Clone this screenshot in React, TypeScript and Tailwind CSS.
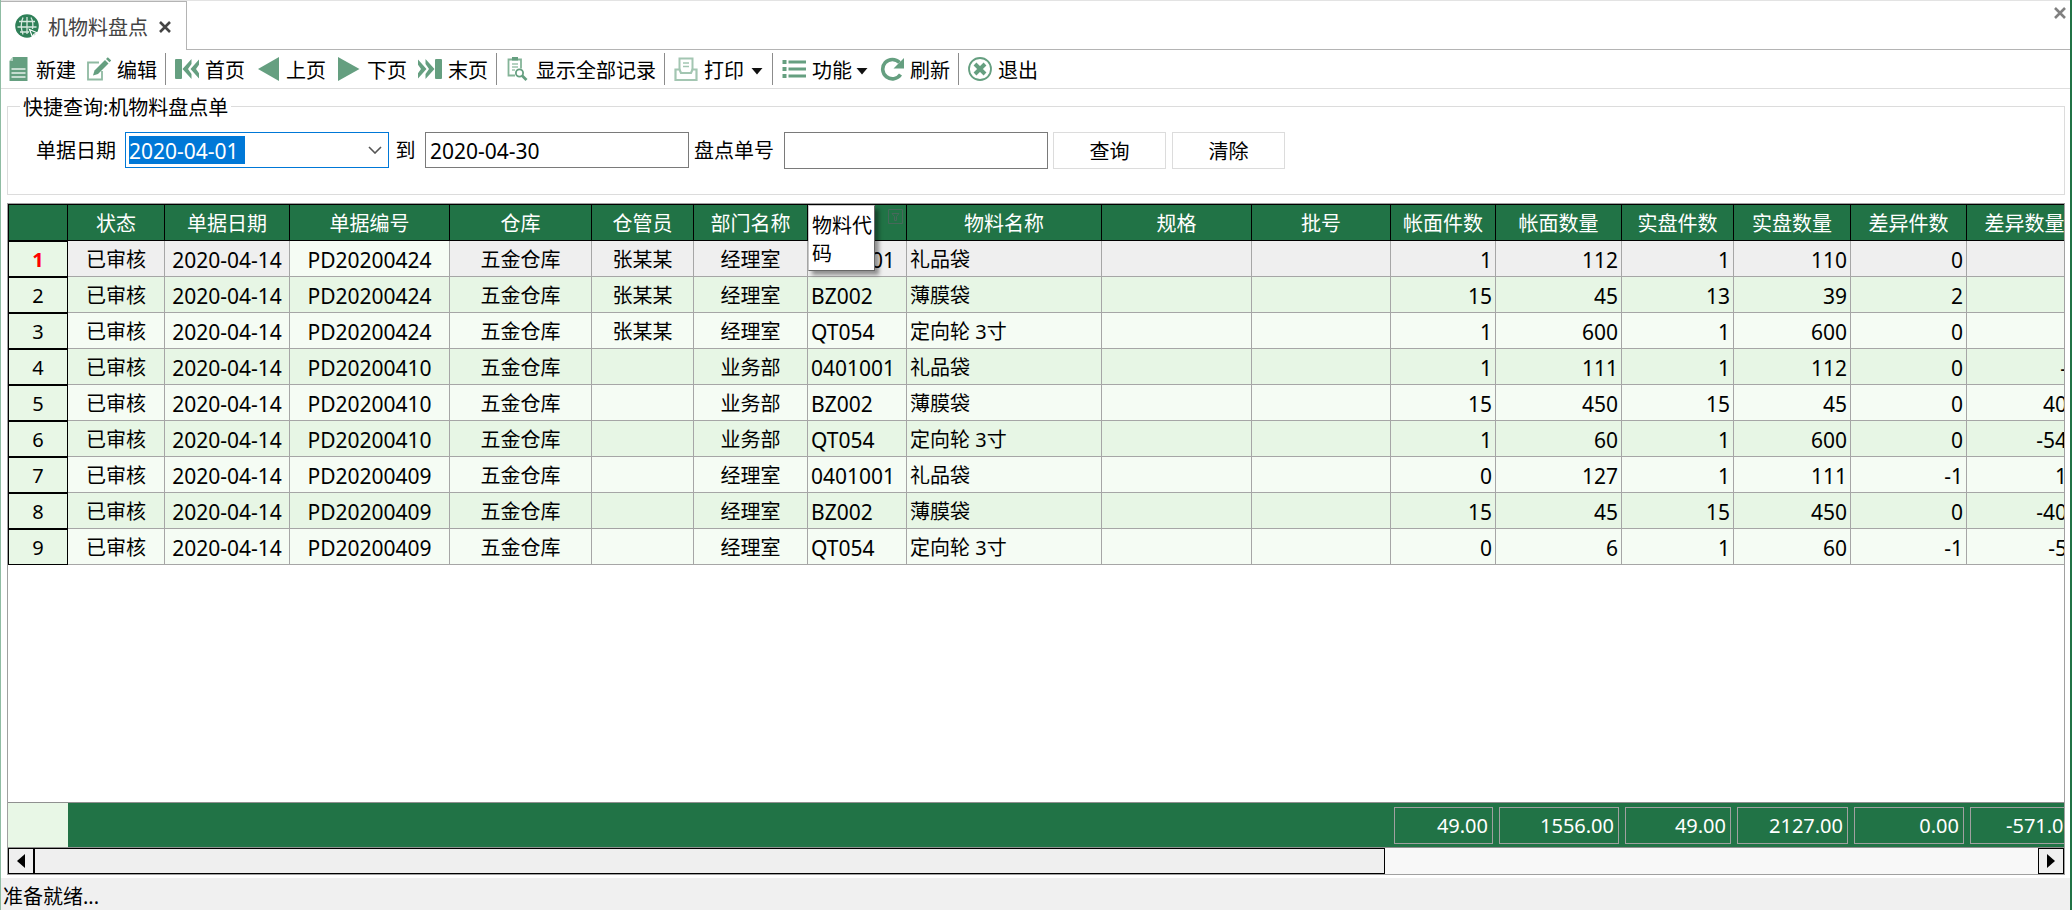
import { useState } from "react";
import type { ReactNode } from "react";
import clsx from "clsx";

type Align = "center" | "left" | "right";

interface Column {
  key: string;
  title: string;
  width: string;
  align: Align;
  latin?: boolean;
  total?: string;
}

const COLUMNS: Column[] = [
  { key: "status", title: "状态", width: "w-[97px]", align: "center" },
  { key: "date", title: "单据日期", width: "w-[125px]", align: "center", latin: true },
  { key: "docNo", title: "单据编号", width: "w-[160px]", align: "center", latin: true },
  { key: "warehouse", title: "仓库", width: "w-[142px]", align: "center" },
  { key: "keeper", title: "仓管员", width: "w-[102px]", align: "center" },
  { key: "dept", title: "部门名称", width: "w-[114px]", align: "center" },
  { key: "code", title: "物料代码", width: "w-[99px]", align: "left", latin: true },
  { key: "name", title: "物料名称", width: "w-[195px]", align: "left" },
  { key: "spec", title: "规格", width: "w-[150px]", align: "left" },
  { key: "batch", title: "批号", width: "w-[139px]", align: "left" },
  { key: "bookPieces", title: "帐面件数", width: "w-[105px]", align: "right", latin: true, total: "49.00" },
  { key: "bookQty", title: "帐面数量", width: "w-[126px]", align: "right", latin: true, total: "1556.00" },
  { key: "realPieces", title: "实盘件数", width: "w-[112px]", align: "right", latin: true, total: "49.00" },
  { key: "realQty", title: "实盘数量", width: "w-[117px]", align: "right", latin: true, total: "2127.00" },
  { key: "diffPieces", title: "差异件数", width: "w-[116px]", align: "right", latin: true, total: "0.00" },
  { key: "diffQty", title: "差异数量", width: "w-[116px]", align: "right", latin: true, total: "-571.00" },
];

const D = "2020-04-14";

const ROWS: string[][] = [
  ["已审核", D, "PD20200424", "五金仓库", "张某某", "经理室", "0401001", "礼品袋", "", "", "1", "112", "1", "110", "0", "2"],
  ["已审核", D, "PD20200424", "五金仓库", "张某某", "经理室", "BZ002", "薄膜袋", "", "", "15", "45", "13", "39", "2", "6"],
  ["已审核", D, "PD20200424", "五金仓库", "张某某", "经理室", "QT054", "定向轮 3寸", "", "", "1", "600", "1", "600", "0", "0"],
  ["已审核", D, "PD20200410", "五金仓库", "", "业务部", "0401001", "礼品袋", "", "", "1", "111", "1", "112", "0", "-1"],
  ["已审核", D, "PD20200410", "五金仓库", "", "业务部", "BZ002", "薄膜袋", "", "", "15", "450", "15", "45", "0", "405"],
  ["已审核", D, "PD20200410", "五金仓库", "", "业务部", "QT054", "定向轮 3寸", "", "", "1", "60", "1", "600", "0", "-540"],
  ["已审核", D, "PD20200409", "五金仓库", "", "经理室", "0401001", "礼品袋", "", "", "0", "127", "1", "111", "-1", "16"],
  ["已审核", D, "PD20200409", "五金仓库", "", "经理室", "BZ002", "薄膜袋", "", "", "15", "45", "15", "450", "0", "-405"],
  ["已审核", D, "PD20200409", "五金仓库", "", "经理室", "QT054", "定向轮 3寸", "", "", "0", "6", "1", "60", "-1", "-54"],
];

const ALIGN = {
  center: "text-center",
  left: "text-left pl-[3px]",
  right: "text-right pr-[3px]",
};

function Icon({ children }: { children: ReactNode }) {
  return (
    <svg viewBox="0 0 24 24" className="w-6 h-6 shrink-0 text-[#659f80]" fill="none" stroke="currentColor" aria-hidden="true">
      {children}
    </svg>
  );
}

function NewIcon() {
  return (
    <Icon>
      <path d="M7 0h14.500v24h-18V4z" fill="currentColor" stroke="none" />
      <path d="M3.500 4 7 0v4z" fill="#b5d2c1" stroke="none" />
      <path d="M5.500 12h14M5.500 16h14M5.500 20h14" stroke="#e6f1ea" strokeWidth="1.500" />
    </Icon>
  );
}

function EditIcon() {
  return (
    <Icon>
      <path d="M12 5.500H1v17h14V14" stroke="#8fbaa2" strokeWidth="1.800" />
      <path d="m6 18.500 1.500-5L18 3l3.500 3.500L11 17z" fill="currentColor" stroke="none" />
      <path d="m19 2 1.800-1.800L24.300 3.500 22.500 5.300z" fill="currentColor" stroke="none" />
    </Icon>
  );
}

function FirstIcon() {
  return (
    <Icon>
      <rect x="0" y="2" width="7" height="20" rx="1" fill="currentColor" stroke="none" />
      <path d="M16.500 2v5L13 12l3.500 5v5L7.500 12zM24.500 2v5L21 12l3.500 5v5L15.500 12z" fill="currentColor" stroke="none" />
    </Icon>
  );
}

function LastIcon() {
  return (
    <Icon>
      <rect x="17" y="2" width="7" height="20" rx="1" fill="currentColor" stroke="none" />
      <path d="M7.500 2v5l3.500 5-3.500 5v5l9-10zM-0.500 2v5L3 12l-3.500 5v5l9-10z" fill="currentColor" stroke="none" />
    </Icon>
  );
}

function PrevIcon() {
  return (
    <Icon>
      <path d="M23 0v24L2 12z" fill="currentColor" stroke="none" />
    </Icon>
  );
}

function NextIcon() {
  return (
    <Icon>
      <path d="M1 0v24l21.500-12z" fill="currentColor" stroke="none" />
    </Icon>
  );
}

function RecordsIcon() {
  return (
    <Icon>
      <path d="M9 18.500H2.500v-16H15v9" stroke="#84b498" strokeWidth="1.800" />
      <path d="M6 0h6v3.500H6z" fill="currentColor" stroke="none" />
      <path d="M6 7h6M6 10h6M6 13h3" stroke="#b5d2c1" strokeWidth="1.800" />
      <circle cx="13.500" cy="16" r="3.600" strokeWidth="1.800" fill="#fff" />
      <path d="m16.200 18.800 4.300 4.200" strokeWidth="2.800" />
    </Icon>
  );
}

function PrintIcon() {
  return (
    <Icon>
      <g stroke="#a3c6b2">
        <path d="M5.500 13V1.500h13V13" strokeWidth="2" />
        <path d="M9 6h6M9 9.500h6" strokeWidth="1.600" />
        <path d="M5.500 12.500h-4V23h21V12.500h-4L17 16H7z" strokeWidth="2.200" />
      </g>
    </Icon>
  );
}

function ListIcon() {
  return (
    <Icon>
      <path d="M6.500 5h17.500M6.500 12h17.500M6.500 19h17.500" strokeWidth="3.200" />
      <path d="M0.500 5h4M0.500 12h4M0.500 19h4" strokeWidth="4" />
    </Icon>
  );
}

function RefreshIcon() {
  return (
    <Icon>
      <path d="M19.500 5.500A9.700 9.700 0 1 0 20.500 17.500" strokeWidth="3.600" />
      <path d="M24 1v10.500H13.500z" fill="currentColor" stroke="none" />
    </Icon>
  );
}

function ExitIcon() {
  return (
    <Icon>
      <circle cx="12" cy="12" r="11" strokeWidth="1.800" />
      <path d="m7 7 10 10M17 7 7 17" strokeWidth="4" />
    </Icon>
  );
}

function GlobeIcon() {
  return (
    <svg viewBox="0 0 24 24" className="w-6 h-6 shrink-0" fill="none" aria-hidden="true">
      <circle cx="12" cy="12" r="11.800" fill="#2f8058" />
      <g stroke="#d7e9df" strokeWidth="1.300">
        <path d="M12 3v17M4 7.500h16M2.500 13h19M5 18h9" />
        <path d="M8 3.500C6 8 6 15 8 20.500M16 3.500C18 7 18 12 17.500 15" />
      </g>
      <path d="m14.500 15.500 8 3.500-3.500 1.200L17.500 23z" fill="#2f8058" stroke="#fff" strokeWidth="1.200" />
    </svg>
  );
}

function CloseGlyph() {
  return (
    <svg viewBox="0 0 12 12" className="w-3 h-3" stroke="currentColor" strokeWidth="2.600" fill="none" aria-hidden="true">
      <path d="m1 1 10 10M11 1 1 11" />
    </svg>
  );
}

function Caret() {
  return (
    <svg viewBox="0 0 14 8" className="w-[14px] h-2 shrink-0" fill="#111" aria-hidden="true">
      <path d="M1.500 1h11L7 7.500z" />
    </svg>
  );
}

function ToolButton({ icon, label, caret }: { icon: ReactNode; label: string; caret?: boolean }) {
  return (
    <button type="button" className="flex items-center gap-[6px] whitespace-nowrap">
      {icon}
      <span className="flex items-center gap-[3px] pt-1">
        {label}
        {caret && <Caret />}
      </span>
    </button>
  );
}

function ToolGroup({ children, last }: { children: ReactNode; last?: boolean }) {
  return (
    <div className={clsx("flex items-center gap-[11px] h-8 pr-2", !last && "border-r border-[#8c8c8c]")}>
      {children}
    </div>
  );
}

function GridColumns() {
  return (
    <colgroup>
      <col className="w-[60px]" />
      {COLUMNS.map((col) => (
        <col key={col.key} className={col.width} />
      ))}
    </colgroup>
  );
}

export default function App() {
  const [from, setFrom] = useState("2020-04-01");
  const [to, setTo] = useState("2020-04-30");
  const [docNo, setDocNo] = useState("");
  const [current, setCurrent] = useState(0);

  return (
    <div className="min-h-screen flex flex-col bg-white border-l border-l-[#8fbca3] border-r-2 border-r-[#217346] text-[20px] leading-7 text-black font-['Noto_Sans','Noto_Sans_CJK_SC',sans-serif]">
      {/* Tabs */}
      <div className="flex h-[50px] border-t border-[#e3e3e3]">
        <div className="flex items-center gap-[9px] w-[186px] pl-[14px] border-t border-r border-[#b4b4b4] text-[#444]">
          <GlobeIcon />
          <span className="pt-1 whitespace-nowrap">机物料盘点</span>
          <button type="button" aria-label="关闭标签" className="pl-[2px] pt-[2px]">
            <CloseGlyph />
          </button>
        </div>
        <div className="flex flex-1 items-start justify-end border-b border-[#b4b4b4] pt-[6px] pr-1 text-[#808080]">
          <button type="button" aria-label="关闭窗口">
            <CloseGlyph />
          </button>
        </div>
      </div>

      {/* Toolbar */}
      <div className="flex items-center gap-[9px] h-[39px] pl-[5px] border-b border-[#dedede]">
        <ToolGroup>
          <ToolButton icon={<NewIcon />} label="新建" />
          <ToolButton icon={<EditIcon />} label="编辑" />
        </ToolGroup>
        <ToolGroup>
          <ToolButton icon={<FirstIcon />} label="首页" />
          <ToolButton icon={<PrevIcon />} label="上页" />
          <ToolButton icon={<NextIcon />} label="下页" />
          <ToolButton icon={<LastIcon />} label="末页" />
        </ToolGroup>
        <ToolGroup>
          <ToolButton icon={<RecordsIcon />} label="显示全部记录" />
        </ToolGroup>
        <ToolGroup>
          <div className="flex items-center gap-[6px]">
            <ToolButton icon={<PrintIcon />} label="打印" />
            <button type="button" aria-label="打印选项" className="pt-1">
              <Caret />
            </button>
          </div>
        </ToolGroup>
        <ToolGroup>
          <ToolButton icon={<ListIcon />} label="功能" caret />
          <ToolButton icon={<RefreshIcon />} label="刷新" />
        </ToolGroup>
        <ToolGroup last>
          <ToolButton icon={<ExitIcon />} label="退出" />
        </ToolGroup>
      </div>

      {/* Quick query */}
      <fieldset className="mt-[3px] ml-[6px] mr-[5px] px-3 border border-[#dcdcdc]">
        <legend className="h-7 px-[3px] pt-[2px]">快捷查询:机物料盘点单</legend>
        <div className="flex items-start pt-3 pb-[25px] pl-4">
          <label htmlFor="date-from" className="w-[89px] pt-[5px] whitespace-nowrap">单据日期</label>
          <div className="flex items-center justify-between w-[264px] h-9 px-[3px] border border-[#0078d7]">
            <input
              id="date-from"
              value={from}
              onChange={(e) => setFrom(e.target.value)}
              className="w-[116px] h-7 pt-[2px] bg-[#0078d7] text-white text-[21px] outline-none"
            />
            <button type="button" aria-label="选择日期" className="pr-[3px]">
              <svg viewBox="0 0 14 8" className="w-[14px] h-2" fill="none" stroke="#555" strokeWidth="1.600" aria-hidden="true">
                <path d="m1 1 6 6 6-6" />
              </svg>
            </button>
          </div>
          <label htmlFor="date-to" className="w-9 pt-[5px] pr-[3px] text-center">到</label>
          <input
            id="date-to"
            value={to}
            onChange={(e) => setTo(e.target.value)}
            className="w-[264px] h-9 px-1 pt-[2px] border border-[#7a7a7a] text-[21px] outline-none"
          />
          <label htmlFor="doc-no" className="w-[95px] pt-[5px] pl-[5px] whitespace-nowrap">盘点单号</label>
          <input
            id="doc-no"
            value={docNo}
            onChange={(e) => setDocNo(e.target.value)}
            className="w-[264px] h-[37px] px-1 pt-[2px] border border-[#7a7a7a] text-[21px] outline-none"
          />
          <div className="flex gap-[6px] pl-[5px]">
            <button type="button" className="w-[113px] h-[37px] pt-[2px] border border-[#dcdcdc]">查询</button>
            <button type="button" className="w-[113px] h-[37px] pt-[2px] border border-[#dcdcdc]">清除</button>
          </div>
        </div>
      </fieldset>

      {/* Grid */}
      <div className="flex-1 flex flex-col mt-2 ml-[6px] mr-[5px] border border-[#a0a0a0] overflow-hidden">
        <div className="flex-1 overflow-hidden">
          <table className="w-[2075px] table-fixed border-separate border-spacing-0">
            <GridColumns />
            <thead>
              <tr className="h-[37px] bg-[#217346] text-white">
                <th className="border border-black" aria-label="行号" />
                {COLUMNS.map((col) => (
                  <th key={col.key} className="relative p-0 pt-[2px] border-t border-r border-b border-black font-normal whitespace-nowrap">
                    {col.key === "code" ? (
                      <>
                        <div className="absolute top-0 left-0 z-10 w-[67px] h-[66px] pl-[3px] pt-[6px] bg-white border border-t-[#c8c8c8] border-l-[#c8c8c8] border-r-[#666] border-b-[#666] shadow-[4px_4px_4px_rgba(0,0,0,0.4)] text-left text-black whitespace-normal">
                          {col.title}
                        </div>
                        <svg viewBox="0 0 15 15" className="absolute top-1 right-[3px] w-[15px] h-[15px]" fill="none" stroke="#47685b" aria-hidden="true">
                          <path d="M0.500 0.500h14v14H0.500zM4 4.500h7L8.500 7.500v4h-2v-4z" />
                        </svg>
                      </>
                    ) : (
                      col.title
                    )}
                  </th>
                ))}
              </tr>
            </thead>
            <tbody>
              {ROWS.map((row, i) => (
                <tr
                  key={i}
                  onClick={() => setCurrent(i)}
                  className={clsx("h-9", i === current ? "bg-[#efefef]" : i % 2 ? "bg-[#e7f6e5]" : "bg-[#f5fcf4]")}
                >
                  <th
                    className={clsx(
                      "p-0 pt-[2px] border border-black bg-[#e8f7e6]",
                      i === current ? "font-bold text-[#ff0000]" : "font-normal",
                    )}
                  >
                    {i + 1}
                  </th>
                  {COLUMNS.map((col, c) => (
                    <td
                      key={col.key}
                      className={clsx(
                        "p-0 pt-[2px] border-r border-b border-[#a6a6a6] whitespace-nowrap overflow-hidden",
                        ALIGN[col.align],
                        col.latin && "text-[21px]",
                        i === current && col.key === "docNo" && "bg-[#f5fcf4]",
                      )}
                    >
                      {row[c]}
                    </td>
                  ))}
                </tr>
              ))}
            </tbody>
          </table>
        </div>

        {/* Totals */}
        <div className="border-y border-[#909090] bg-[#217346]">
          <table className="w-[2075px] table-fixed border-separate border-spacing-0 text-white">
            <GridColumns />
            <tbody>
              <tr className="h-11">
                <td className="bg-[#e8f7e6]" />
                {COLUMNS.map((col) => (
                  <td key={col.key} className="p-0 pl-[3px] pr-[3px]">
                    {col.total && (
                      <div className="h-[37px] pt-1 pr-1 border border-[#a0a0a0] text-right">{col.total}</div>
                    )}
                  </td>
                ))}
              </tr>
            </tbody>
          </table>
        </div>

        {/* Scroll bar */}
        <div className="flex h-[26px] bg-[#f8f8f8]">
          <button type="button" aria-label="向左" className="flex items-center justify-center w-[26px] border border-black bg-[#efefef]">
            <svg viewBox="0 0 8 14" className="w-2 h-[14px]" fill="#000" aria-hidden="true">
              <path d="M8 0v14L0 7z" />
            </svg>
          </button>
          <div className="flex-1">
            <div className="w-[67.4%] h-full border border-black bg-[#efefef]" />
          </div>
          <button type="button" aria-label="向右" className="flex items-center justify-center w-[26px] border border-black bg-[#efefef]">
            <svg viewBox="0 0 8 14" className="w-2 h-[14px]" fill="#000" aria-hidden="true">
              <path d="M0 0v14l8-7z" />
            </svg>
          </button>
        </div>
      </div>

      {/* Status bar */}
      <div className="h-8 mt-[3px] pl-[2px] pt-[5px] bg-[#f0f0f0]">准备就绪...</div>
    </div>
  );
}
